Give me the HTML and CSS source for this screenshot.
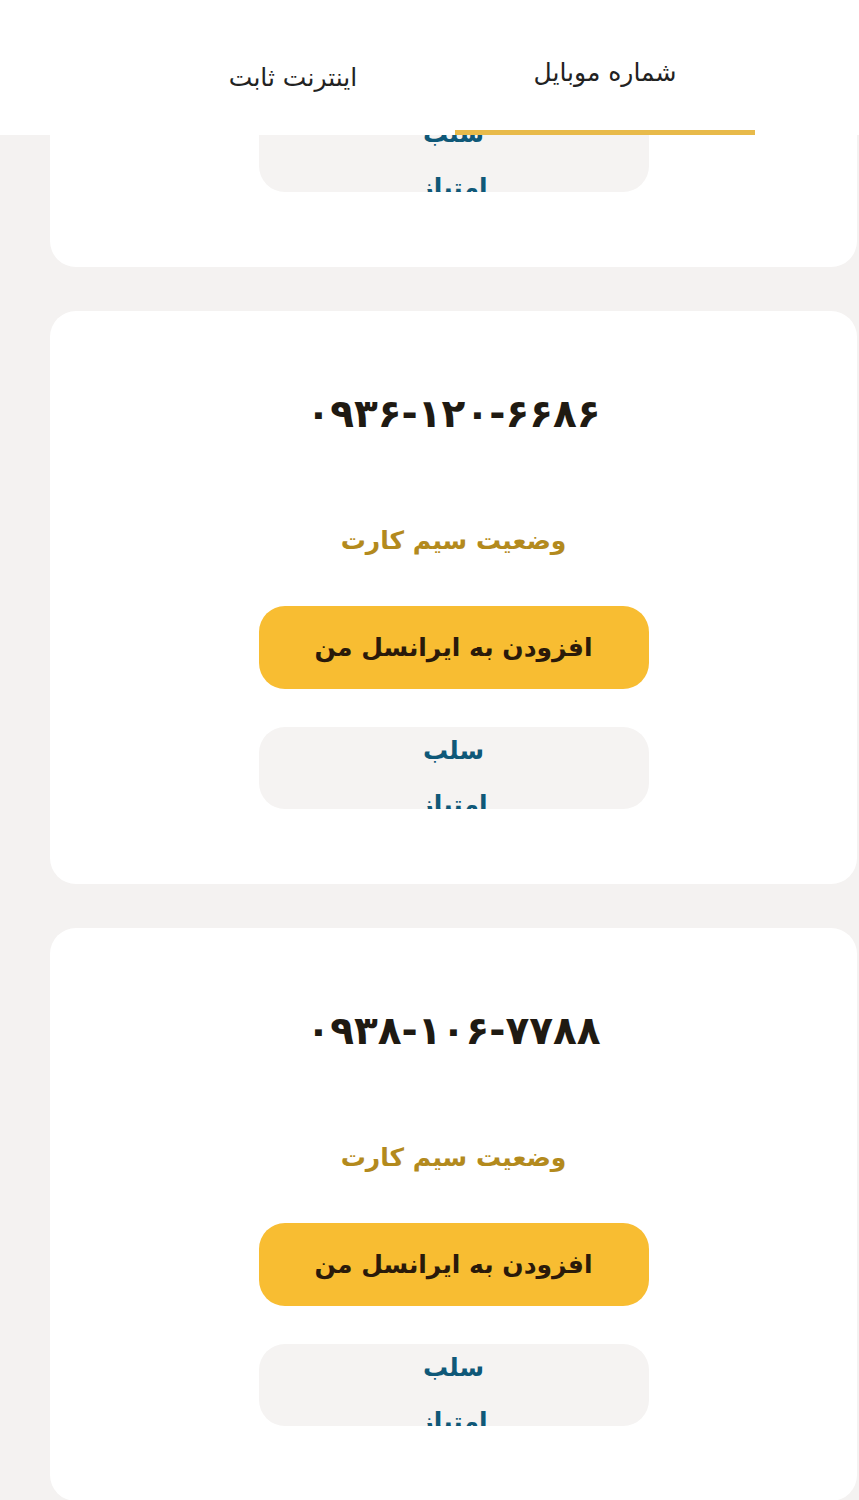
FILE: index.html
```html
<!DOCTYPE html>
<html lang="fa" dir="rtl">
<head>
<meta charset="utf-8">
<title>سیم کارت‌ها</title>
<link rel="stylesheet" href="styles.css">
</head>
<body>
<header class="tabs">
  <div class="tab tab-active">شماره موبایل</div>
  <div class="tab tab-second">اینترنت ثابت</div>
</header>
<main class="list">
  <section class="card">
    <div class="phone" dir="ltr">۰۹۱۲-۳۴۵-۶۷۸۹</div>
    <div class="status">وضعیت سیم کارت</div>
    <button class="btn-add">افزودن به ایرانسل من</button>
    <button class="btn-revoke"><span class="line">سلب</span><span class="line line-2">امتیاز</span></button>
  </section>
  <section class="card">
    <div class="phone" dir="ltr">۰۹۳۶-۱۲۰-۶۶۸۶</div>
    <div class="status">وضعیت سیم کارت</div>
    <button class="btn-add">افزودن به ایرانسل من</button>
    <button class="btn-revoke"><span class="line">سلب</span><span class="line line-2">امتیاز</span></button>
  </section>
  <section class="card">
    <div class="phone" dir="ltr">۰۹۳۸-۱۰۶-۷۷۸۸</div>
    <div class="status">وضعیت سیم کارت</div>
    <button class="btn-add">افزودن به ایرانسل من</button>
    <button class="btn-revoke"><span class="line">سلب</span><span class="line line-2">امتیاز</span></button>
  </section>
</main>
</body>
</html>
```
FILE: styles.css
```css
* { box-sizing: border-box; }
html, body {
  margin: 0;
  padding: 0;
  background: #f4f2f1;
  font-family: "DejaVu Sans", "Noto Sans", sans-serif;
}
.tabs {
  position: fixed;
  top: 0;
  left: 0;
  right: 0;
  height: 135px;
  background: #ffffff;
  display: flex;
  flex-direction: row;
  padding-right: 104px;
  z-index: 10;
}
.tab {
  height: 135px;
  display: flex;
  align-items: center;
  justify-content: center;
  font-size: 25px;
  color: #222222;
}
.tab-active {
  width: 300px;
  border-bottom: 5px solid #e8ba4a;
  padding-top: 14px;
}
.tab-second {
  width: 324px;
  padding-top: 19px;
}
.list {
  margin-top: -306px;
  margin-left: 50px;
  margin-right: 2px;
  display: flex;
  flex-direction: column;
  gap: 44px;
  padding-bottom: 40px;
}
.card {
  background: #ffffff;
  border-radius: 26px;
  height: 573px;
  padding-top: 73px;
  display: flex;
  flex-direction: column;
  align-items: center;
}
.phone {
  height: 60px;
  line-height: 60px;
  font-size: 39px;
  font-weight: bold;
  color: #1f1a12;
}
.status {
  margin-top: 77px;
  height: 40px;
  line-height: 40px;
  font-size: 25px;
  font-weight: bold;
  color: #b38a1d;
}
.btn-add {
  margin-top: 45px;
  width: 390px;
  height: 83px;
  border: none;
  border-radius: 26px;
  background: #f8bd32;
  color: #2a1a0a;
  font-family: inherit;
  font-size: 25px;
  font-weight: bold;
  padding: 0;
}
.btn-revoke {
  margin-top: 38px;
  width: 390px;
  height: 82px;
  border: none;
  border-radius: 26px;
  background: #f5f3f2;
  color: #0f5878;
  font-family: inherit;
  font-size: 25px;
  font-weight: bold;
  padding: 0;
  overflow: hidden;
  display: flex;
  flex-direction: column;
  align-items: center;
  justify-content: flex-start;
}
.line {
  display: block;
  height: 48px;
  line-height: 48px;
  flex-shrink: 0;
}
.line-2 {
  height: 60px;
  line-height: 60px;
}
```
